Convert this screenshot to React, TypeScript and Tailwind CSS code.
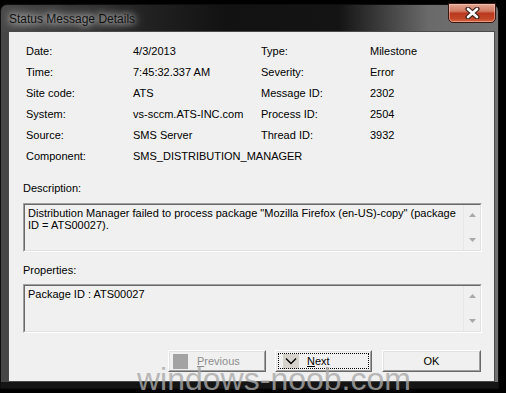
const fields: [string, string, string, string][] = [
  ["Date:", "4/3/2013", "Type:", "Milestone"],
  ["Time:", "7:45:32.337 AM", "Severity:", "Error"],
  ["Site code:", "ATS", "Message ID:", "2302"],
  ["System:", "vs-sccm.ATS-INC.com", "Process ID:", "2504"],
  ["Source:", "SMS Server", "Thread ID:", "3932"],
  ["Component:", "SMS_DISTRIBUTION_MANAGER", "", ""],
];

function CloseButton() {
  return (
    <div className="mt-[-2px] mr-[2px] w-[48px] h-[20px] rounded-b-[5px] border border-[#3a1610] bg-[linear-gradient(180deg,#e3a694_0%,#d27a62_40%,#b9391d_52%,#c24527_80%,#d9673f_100%)] shadow-[inset_0_0_0_1px_rgba(255,220,210,0.45)] flex items-center justify-center">
      <svg width="15" height="12" viewBox="0 0 15 12">
        <path d="M3 2 L12 10 M12 2 L3 10" stroke="#3b2420" strokeWidth="5" strokeLinecap="round" />
        <path d="M3 2 L12 10 M12 2 L3 10" stroke="#ffffff" strokeWidth="2.6" strokeLinecap="round" />
      </svg>
    </div>
  );
}

function ScrollArrows() {
  return (
    <div className="w-[17px] border-l border-[#e6e6e6] flex flex-col items-center justify-between py-[8px]">
      <svg width="7" height="4" viewBox="0 0 7 4">
        <path d="M0 4 L3.5 0 L7 4 Z" fill="#a8a8a8" />
      </svg>
      <svg width="7" height="4" viewBox="0 0 7 4">
        <path d="M0 0 L3.5 4 L7 0 Z" fill="#a8a8a8" />
      </svg>
    </div>
  );
}

function TextBox({ children }: { children: React.ReactNode }) {
  return (
    <div className="ml-[14px] w-[459px] h-[49px] border-t border-l border-[#a0a0a0] border-b border-r border-b-white border-r-white">
      <div className="h-full flex border-t border-l border-[#696969] border-b border-r border-b-[#e3e3e3] border-r-[#e3e3e3]">
        <div className="flex-1 pl-[3px] pt-[2px] leading-[12px] whitespace-nowrap">
          {children}
        </div>
        <ScrollArrows />
      </div>
    </div>
  );
}

function Button({
  children,
  focused,
  className,
}: {
  children: React.ReactNode;
  focused?: boolean;
  className?: string;
}) {
  return (
    <div
      className={`h-[22px] border-t border-l border-white border-b border-r border-b-[#696969] border-r-[#696969] ${className ?? ""}`}
    >
      <div className="h-full border-t border-l border-[#e3e3e3] border-b border-r border-b-[#a0a0a0] border-r-[#a0a0a0] p-[1px]">
        <div
          className={`h-full flex items-center ${focused ? "outline outline-1 outline-dotted outline-black -outline-offset-1" : ""}`}
        >
          {children}
        </div>
      </div>
    </div>
  );
}

export default function App() {
  return (
    <div className="relative w-[506px] h-[393px] overflow-hidden bg-black font-['Liberation_Sans',Arial,sans-serif] text-[11px] text-black">
      <div className="mt-[4px] w-[499px] h-[385px] flex flex-col rounded-t-[7px] border border-[#0e0e0e] bg-[linear-gradient(90deg,#474747_0%,#262626_25%,#121212_45%,#141414_68%,#6a6a6a_86%,#727272_100%)]">
        {/* title bar */}
        <div className="h-[26px] flex items-start justify-between">
          <span className="ml-[8px] mt-[5px] text-[12px] text-[#111] [text-shadow:0_0_6px_rgba(255,255,255,0.9),0_0_12px_rgba(255,255,255,0.75),0_0_20px_rgba(255,255,255,0.55)]">
            Status Message Details
          </span>
          <CloseButton />
        </div>

        <div className="flex-1 flex">
          <div className="w-[7px]" />
          {/* client area */}
          <div className="w-[487px] h-[351px] border border-[#4a4a4a] bg-[#f0f0f0] flex flex-col">
            <div className="pt-[9px] pl-[17px] grid grid-cols-[107px_128px_109px_1fr]">
              {fields.map(([l1, v1, l2, v2]) => (
                <div key={l1} className="contents">
                  <div className="h-[21px] flex items-center">{l1}</div>
                  <div className="h-[21px] flex items-center whitespace-nowrap">{v1}</div>
                  <div className="h-[21px] flex items-center">{l2}</div>
                  <div className="h-[21px] flex items-center">{v2}</div>
                </div>
              ))}
            </div>

            <div className="mt-[15px] ml-[14px] leading-[13px]">Description:</div>
            <div className="mt-[8px]">
              <TextBox>
                Distribution Manager failed to process package "Mozilla Firefox (en-US)-copy" (package
                <br />
                ID = ATS00027).
              </TextBox>
            </div>

            <div className="mt-[12px] ml-[14px] leading-[13px]">Properties:</div>
            <div className="mt-[7px]">
              <TextBox>Package ID : ATS00027</TextBox>
            </div>

            <div className="mt-[17px] flex pl-[159px]">
              <Button className="w-[98px]">
                <div className="ml-[2px] w-[15px] h-[15px] bg-[#a3a3a3]" />
                <span className="ml-[9px] text-[#8d8d8d]">
                  <span className="underline">P</span>revious
                </span>
              </Button>
              <Button focused className="ml-[9px] w-[97px]">
                <div className="ml-[5px] w-[16px] h-[15px] bg-[#d6d3cc] flex items-center justify-center">
                  <svg width="12" height="7" viewBox="0 0 12 7">
                    <path d="M1 0.5 L6 5.5 L11 0.5" stroke="#000" strokeWidth="1.4" fill="none" />
                  </svg>
                </div>
                <span className="ml-[8px]">
                  <span className="underline">N</span>ext
                </span>
              </Button>
              <Button className="ml-[10px] w-[99px]">
                <span className="w-full text-center">OK</span>
              </Button>
            </div>
          </div>
          <div className="w-[3px]" />
        </div>

        <div className="h-[6px] bg-[#151515]" />
      </div>

      <div className="absolute left-[137px] top-[361px] text-[32px] leading-[36px] text-[#a9a9a9] opacity-80 pointer-events-none">
        windows-noob.com
      </div>
    </div>
  );
}
